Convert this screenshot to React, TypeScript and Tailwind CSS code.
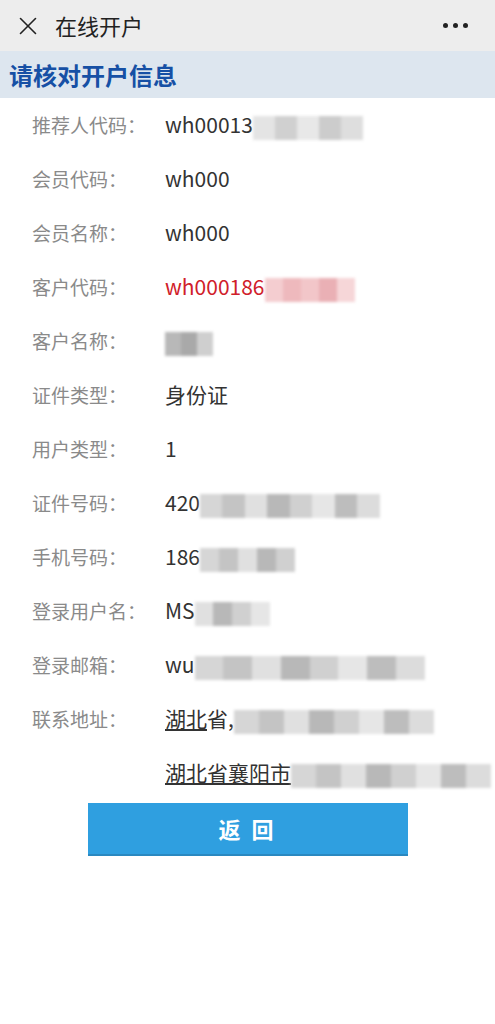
import { X } from "lucide-react";

const font = { fontFamily: '"Noto Sans CJK SC", "Noto Sans", sans-serif' };

function Blur({ w, shades }: { w: number; shades: string[] }) {
  return (
    <span className="inline-flex h-[24px] align-middle blur-[1.5px]" style={{ width: w }}>
      {shades.map((s, i) => (
        <span key={i} className="h-full flex-1" style={{ background: s }} />
      ))}
    </span>
  );
}

const g = ["#d6d6d6", "#c4c4c4", "#e0e0e0", "#b8b8b8", "#d0d0d0", "#e6e6e6", "#bdbdbd", "#dcdcdc"];

export default function App() {
  const rows: { label: string; value: React.ReactNode }[] = [
    { label: "推荐人代码：", value: <>wh00013<Blur w={110} shades={["#e4e4e4", "#d0d0d0", "#e8e8e8", "#cccccc", "#dedede"]} /></> },
    { label: "会员代码：", value: "wh000" },
    { label: "会员名称：", value: "wh000" },
    {
      label: "客户代码：",
      value: (
        <span className="text-[#d0202a]">
          wh000186<Blur w={90} shades={["#f4cdd0", "#eeb9bd", "#f2c6c9", "#eab0b5", "#f6d6d8"]} />
        </span>
      ),
    },
    { label: "客户名称：", value: <Blur w={48} shades={["#b8b8b8", "#a9a9a9", "#cfcfcf"]} /> },
    { label: "证件类型：", value: "身份证" },
    { label: "用户类型：", value: "1" },
    { label: "证件号码：", value: <>420<Blur w={180} shades={g} /></> },
    { label: "手机号码：", value: <>186<Blur w={95} shades={g.slice(0, 5)} /></> },
    { label: "登录用户名：", value: <>MS<Blur w={75} shades={g.slice(2, 6)} /></> },
    { label: "登录邮箱：", value: <>wu<Blur w={230} shades={g} /></> },
    {
      label: "联系地址：",
      value: (
        <>
          <span className="underline">湖北</span>省,<Blur w={200} shades={g} />
        </>
      ),
    },
    {
      label: "",
      value: (
        <>
          <span className="underline">湖北省襄阳市</span>
          <Blur w={200} shades={g} />
        </>
      ),
    },
  ];

  return (
    <div className="w-[495px] min-h-[1024px] bg-white" style={font}>
      <div className="flex h-[51px] items-center bg-[#ededed] pl-[13px] pr-[27px]">
        <X className="h-[30px] w-[30px] text-[#222]" strokeWidth={1.3} />
        <span className="ml-[12px] text-[22px] text-[#222]">在线开户</span>
        <div className="ml-auto flex gap-[5px]">
          <span className="h-[5px] w-[5px] rounded-full bg-[#222]" />
          <span className="h-[5px] w-[5px] rounded-full bg-[#222]" />
          <span className="h-[5px] w-[5px] rounded-full bg-[#222]" />
        </div>
      </div>
      <div className="flex h-[47px] items-center bg-[#dde6ef] pl-[9px]">
        <span className="text-[24px] font-bold text-[#1650a5]">请核对开户信息</span>
      </div>
      <div>
        {rows.map((r, i) => (
          <div key={i} className="flex h-[54px] items-center whitespace-nowrap">
            <div className="w-[165px] pl-[32px] text-[19px] text-[#8a8a8a]">{r.label}</div>
            <div className="text-[21px] text-[#333]">{r.value}</div>
          </div>
        ))}
      </div>
      <div className="mt-[3px] flex justify-center">
        <button className="h-[53px] w-[320px] border-b-2 border-[#2a88c0] bg-[#2f9fe0] text-[22px] font-bold tracking-[3px] text-white">
          返 回
        </button>
      </div>
    </div>
  );
}
